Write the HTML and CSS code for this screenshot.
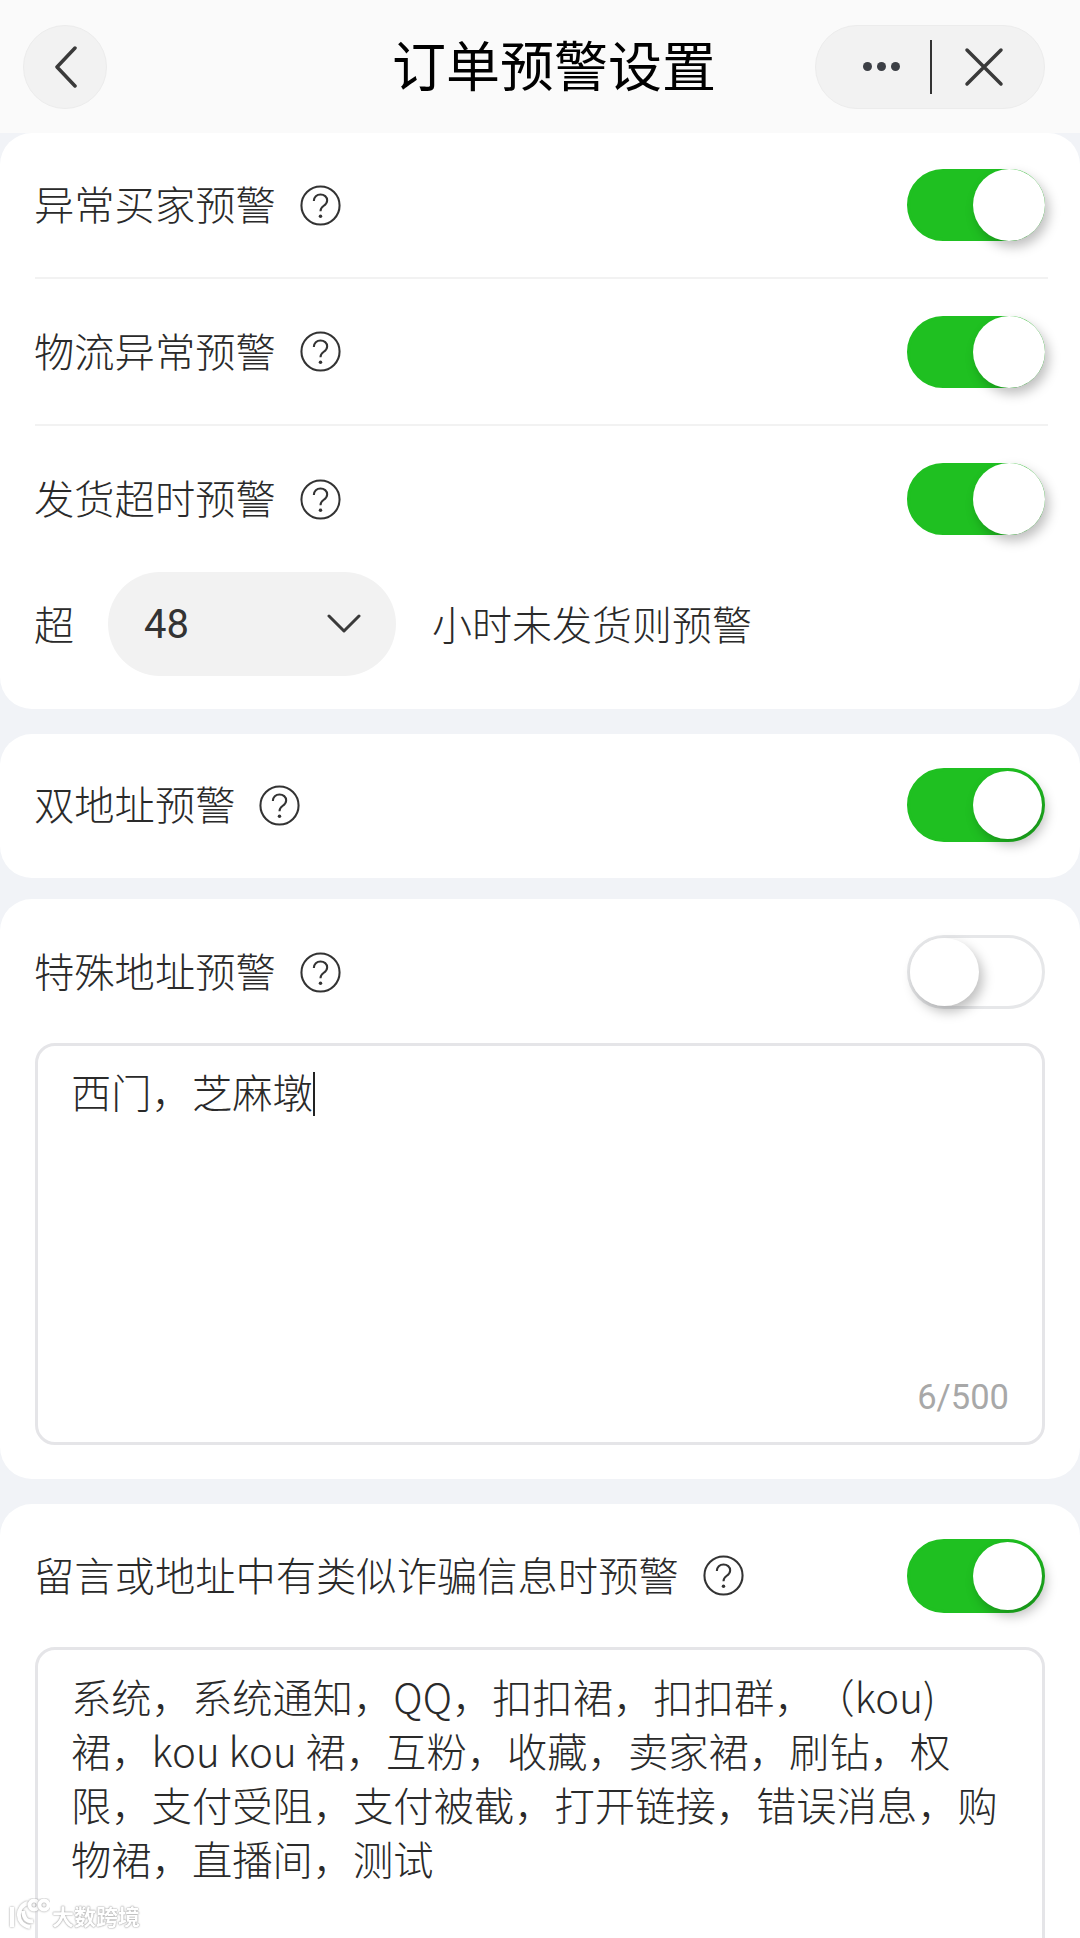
FILE: index.html
```html
<!DOCTYPE html>
<html lang="zh">
<head>
<meta charset="utf-8">
<title>订单预警设置</title>
<link rel="stylesheet" href="styles.css">
</head>
<body>
<div class="page">
  <header class="nav">
    <button class="back" aria-label="返回">
      <svg width="30" height="42" viewBox="0 0 30 42"><path d="M24 2 6 21l18 19" class="ic"/></svg>
    </button>
    <h1 class="title">订单预警设置</h1>
    <div class="capsule">
      <span class="cap-part cap-more"><i class="dot"></i><i class="dot"></i><i class="dot"></i></span>
      <span class="cap-line"></span>
      <span class="cap-part cap-close">
        <svg width="40" height="40" viewBox="0 0 40 40"><path d="M3 3l34 34M37 3 3 37" class="ic"/></svg>
      </span>
    </div>
  </header>

  <section class="card card-first">
    <div class="row row-line">
      <div class="label">异常买家预警<svg class="help" viewBox="0 0 40 40"><use href="#help"/></svg></div>
      <span class="toggle on"></span>
    </div>
    <div class="row row-line">
      <div class="label">物流异常预警<svg class="help" viewBox="0 0 40 40"><use href="#help"/></svg></div>
      <span class="toggle on"></span>
    </div>
    <div class="row">
      <div class="label">发货超时预警<svg class="help" viewBox="0 0 40 40"><use href="#help"/></svg></div>
      <span class="toggle on"></span>
    </div>
    <div class="hours">
      <span>超</span>
      <div class="select"><span class="select-val">48</span>
        <svg width="34" height="20" viewBox="0 0 34 20"><path d="M2 2l15 15L32 2" class="ic thin"/></svg>
      </div>
      <span>小时未发货则预警</span>
    </div>
  </section>

  <section class="card card-double">
    <div class="row">
      <div class="label">双地址预警<svg class="help" viewBox="0 0 40 40"><use href="#help"/></svg></div>
      <span class="toggle on tall"></span>
    </div>
  </section>

  <section class="card card-special">
    <div class="row">
      <div class="label">特殊地址预警<svg class="help" viewBox="0 0 40 40"><use href="#help"/></svg></div>
      <span class="toggle off"></span>
    </div>
    <div class="area area-special">
      <div class="area-text">西门，芝麻墩<span class="caret"></span></div>
      <div class="count">6/500</div>
    </div>
  </section>

  <section class="card card-fraud">
    <div class="row">
      <div class="label">留言或地址中有类似诈骗信息时预警<svg class="help" viewBox="0 0 40 40"><use href="#help"/></svg></div>
      <span class="toggle on tall"></span>
    </div>
    <div class="area area-fraud">
      <div class="area-text">系统，系统通知，QQ，扣扣裙，扣扣群，（kou)<br>裙，kou kou 裙，互粉，收藏，卖家裙，刷钻，权<br>限，支付受阻，支付被截，打开链接，错误消息，购<br>物裙，直播间，测试</div>
    </div>
  </section>

  <div class="watermark">
    <svg width="42" height="34" viewBox="0 0 42 34"><path d="M4 9v20M20 5C8 8 7 26 22 29M15 13c1 9 5 11 10 10" class="wm"/><circle cx="26" cy="7" r="4.500" class="wm"/><circle cx="36" cy="7" r="4.500" class="wm"/></svg>
    <span>大数跨境</span>
  </div>
</div>

<svg class="defs" width="0" height="0">
  <symbol id="help" viewBox="0 0 40 40">
    <circle cx="20" cy="20" r="18.600" fill="none" stroke="#333" stroke-width="2"/>
    <path d="M13.500 15.500c0-3.800 2.900-6.300 6.500-6.300s6.500 2.400 6.500 5.900c0 2.800-1.700 4.100-3.600 5.400-1.900 1.300-2.900 2.500-2.900 5" fill="none" stroke="#333" stroke-width="2"/>
    <circle cx="20" cy="30.500" r="1.700" fill="#333"/>
  </symbol>
</svg>
</body>
</html>
```
FILE: styles.css
```css
* { box-sizing: border-box; }
html, body { margin: 0; padding: 0; }
body {
  width: 1080px;
  height: 1938px;
  overflow: hidden;
  background: #f1f3f7;
  font-family: "Noto Sans CJK SC", "Noto Sans", sans-serif;
  font-weight: 300;
  text-spacing-trim: space-all;
  color: #2a2a2a;
}
.page { position: relative; width: 1080px; height: 1938px; overflow: hidden; }
.defs { position: absolute; }

.nav {
  height: 133px;
  background: #fafafa;
  display: flex;
  align-items: center;
  justify-content: space-between;
  padding: 0 35px 0 23px;
  position: relative;
}
.back {
  width: 84px;
  height: 84px;
  border-radius: 50%;
  border: 1px solid #ececec;
  background: #f2f2f2;
  padding: 0 0 0 1px;
  display: flex;
  align-items: center;
  justify-content: center;
}
.title {
  margin: 0;
  font-size: 54px;
  font-weight: 400;
  color: #000;
  line-height: 84px;
  position: absolute;
  left: 392px;
  top: 22px;
  white-space: nowrap;
}
.capsule {
  width: 230px;
  height: 84px;
  border-radius: 42px;
  border: 1px solid #ececec;
  background: #f2f2f2;
  display: flex;
  align-items: center;
}
.cap-part {
  display: flex;
  align-items: center;
  justify-content: center;
  gap: 5px;
}
.cap-more { width: 114px; padding-left: 16px; }
.cap-close { width: 112px; padding-right: 9px; }
.dot { width: 9px; height: 9px; border-radius: 50%; background: #3c3f45; }
.cap-line { width: 2px; height: 54px; background: #333; }
.ic { fill: none; stroke: #3a3a3a; stroke-width: 3.500; stroke-linecap: round; stroke-linejoin: round; }
.ic.thin { stroke-width: 3; }

.card {
  background: #fff;
  border-radius: 32px;
  padding: 0 35px;
  margin-bottom: 25px;
}
.card-first { height: 576px; }
.card-double { height: 144px; margin-bottom: 21px; }
.card-special { height: 580px; margin-bottom: 25px; }
.card-fraud { height: 600px; }

.row {
  display: flex;
  align-items: center;
  justify-content: space-between;
}
.card-first .row { height: 146px; }
.card-first .row-line { height: 147px; margin-right: -3px; padding-right: 3px; border-bottom: 2px solid #f2f2f2; }
.card-first .row:first-child { height: 146px; }
.card-double .row { height: 142px; }
.card-special .row { height: 144px; padding-top: 2px; }
.card-fraud .row { height: 143px; }
.label {
  display: flex;
  align-items: center;
  margin-left: -1px;
  padding-bottom: 4px;
  font-size: 40.300px;
  line-height: 50px;
}
.help { width: 41px; height: 41px; margin: 4px 0 0 24px; flex: none; }

.toggle {
  width: 138px;
  height: 74px;
  border-radius: 37px;
  border: 3px solid #e6e7e9;
  background: #fff;
  position: relative;
  flex: none;
  display: block;
}
.toggle::after {
  content: "";
  position: absolute;
  left: 0;
  top: 0;
  width: 69px;
  height: 68px;
  border-radius: 50%;
  background: #fff;
  box-shadow: 4px 6px 12px rgba(0, 0, 0, 0.25);
}
.toggle.on { height: 72px; border-radius: 36px; background: #1fc021; border-color: #1fc021; }
.toggle.on::after { left: 63px; top: -3px; width: 72px; height: 72px; }
.toggle.tall { height: 74px; border-radius: 37px; }
.toggle.tall::after { left: 63px; top: 0; width: 69px; height: 68px; }

.hours {
  display: flex;
  align-items: center;
  height: 104px;
  gap: 36px;
  margin-left: -1px;
}
.hours > span { font-size: 40px; line-height: 50px; padding-bottom: 2px; }
.select {
  width: 288px;
  height: 104px;
  margin-left: -2px;
  border-radius: 52px;
  background: #f2f2f2;
  display: flex;
  align-items: center;
  justify-content: space-between;
  padding: 0 35px 0 36px;
}
.select-val { font-family: Roboto, sans-serif; font-weight: 400; font-size: 40px; color: #333; }

.area {
  border: 3px solid #e5e5e8;
  border-radius: 20px;
  padding: 18px 33px;
  position: relative;
  font-size: 40.300px;
  line-height: 54px;
}
.area-special { height: 402px; }
.area-fraud { height: 520px; padding-top: 19px; }
.area-text { white-space: nowrap; }
.caret { display: inline-block; width: 2px; height: 44px; background: #222; vertical-align: -8px; }
.count {
  position: absolute;
  right: 33px;
  bottom: 23px;
  font-family: Roboto, sans-serif;
  font-weight: 400;
  font-size: 34.500px;
  line-height: 44px;
  color: #a8a8a8;
}

.watermark {
  position: absolute;
  left: 8px;
  bottom: 6px;
  display: flex;
  align-items: center;
  gap: 2px;
  color: #fff;
  font-size: 22px;
  font-weight: 700;
  text-shadow: 0 0 2px #888, 0 0 1px #888;
  opacity: .85;
}
.wm { fill: none; stroke: #fff; stroke-width: 4; filter: drop-shadow(0 0 1px #888); }
```
